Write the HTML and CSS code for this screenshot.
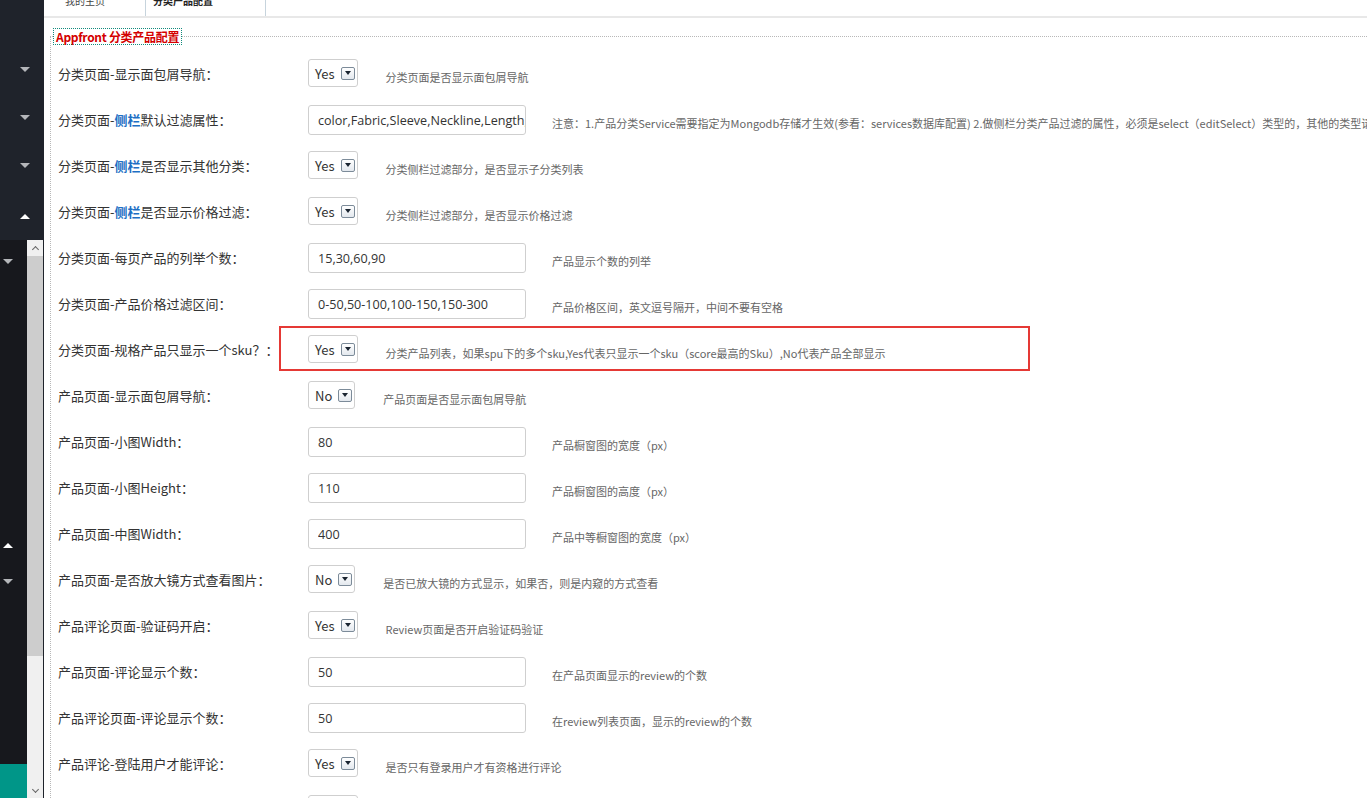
FILE: index.html
```html
<!DOCTYPE html>
<html lang="zh-CN">
<head>
<meta charset="utf-8">
<title>Appfront 分类产品配置</title>
<link rel="stylesheet" href="styles.css">
</head>
<body>
<div class="app">
  <aside class="sidebar">
    <div class="side-top">
      <div class="menu-item"><span class="tri down"></span></div>
      <div class="menu-item"><span class="tri down"></span></div>
      <div class="menu-item"><span class="tri down"></span></div>
      <div class="menu-item last"><span class="tri up"></span></div>
    </div>
    <div class="side-bottom">
      <div class="side-inner">
        <div class="sub-item first"><span class="tri down"></span></div>
        <div class="sub-gap"></div>
        <div class="sub-item"><span class="tri up"></span></div>
        <div class="sub-item short"><span class="tri down"></span></div>
        <div class="sub-fill"></div>
        <div class="sub-active"></div>
      </div>
      <div class="scrollbar">
        <div class="sb-btn"><span class="chev chev-up"></span></div>
        <div class="sb-thumb"></div>
        <div class="sb-track"></div>
        <div class="sb-btn"><span class="chev chev-down"></span></div>
      </div>
    </div>
  </aside>

  <main class="main">
    <div class="tabs">
      <div class="tab first"><span class="tab-text">我的主页</span></div>
      <div class="tab active"><span class="tab-text">分类产品配置</span></div>
    </div>

    <fieldset class="panel">
      <legend class="legend">Appfront 分类产品配置</legend>

      <div class="row">
        <label class="label">分类页面-显示面包屑导航：</label>
        <div class="select"><span>Yes</span><span class="arrow"></span></div>
        <span class="note sel">分类页面是否显示面包屑导航</span>
      </div>

      <div class="row">
        <label class="label">分类页面-<b class="hl">侧栏</b>默认过滤属性：</label>
        <input class="text" type="text" value="color,Fabric,Sleeve,Neckline,Length,Style">
        <span class="note inp">注意：1.产品分类Service需要指定为Mongodb存储才生效(参看：services数据库配置) 2.做侧栏分类产品过滤的属性，必须是select（editSelect）类型的，其他的类型请不要填写</span>
      </div>

      <div class="row">
        <label class="label">分类页面-<b class="hl">侧栏</b>是否显示其他分类：</label>
        <div class="select"><span>Yes</span><span class="arrow"></span></div>
        <span class="note sel">分类侧栏过滤部分，是否显示子分类列表</span>
      </div>

      <div class="row">
        <label class="label">分类页面-<b class="hl">侧栏</b>是否显示价格过滤：</label>
        <div class="select"><span>Yes</span><span class="arrow"></span></div>
        <span class="note sel">分类侧栏过滤部分，是否显示价格过滤</span>
      </div>

      <div class="row">
        <label class="label">分类页面-每页产品的列举个数：</label>
        <input class="text" type="text" value="15,30,60,90">
        <span class="note inp">产品显示个数的列举</span>
      </div>

      <div class="row">
        <label class="label">分类页面-产品价格过滤区间：</label>
        <input class="text" type="text" value="0-50,50-100,100-150,150-300">
        <span class="note inp">产品价格区间，英文逗号隔开，中间不要有空格</span>
      </div>

      <div class="row">
        <label class="label">分类页面-规格产品只显示一个sku？：</label>
        <div class="select"><span>Yes</span><span class="arrow"></span></div>
        <span class="note sel">分类产品列表，如果spu下的多个sku,Yes代表只显示一个sku（score最高的Sku）,No代表产品全部显示</span>
      </div>

      <div class="row">
        <label class="label">产品页面-显示面包屑导航：</label>
        <div class="select"><span>No</span><span class="arrow"></span></div>
        <span class="note sel">产品页面是否显示面包屑导航</span>
      </div>

      <div class="row">
        <label class="label">产品页面-小图Width：</label>
        <input class="text" type="text" value="80">
        <span class="note inp">产品橱窗图的宽度（px）</span>
      </div>

      <div class="row">
        <label class="label">产品页面-小图Height：</label>
        <input class="text" type="text" value="110">
        <span class="note inp">产品橱窗图的高度（px）</span>
      </div>

      <div class="row">
        <label class="label">产品页面-中图Width：</label>
        <input class="text" type="text" value="400">
        <span class="note inp">产品中等橱窗图的宽度（px）</span>
      </div>

      <div class="row">
        <label class="label">产品页面-是否放大镜方式查看图片：</label>
        <div class="select"><span>No</span><span class="arrow"></span></div>
        <span class="note sel">是否已放大镜的方式显示，如果否，则是内窥的方式查看</span>
      </div>

      <div class="row">
        <label class="label">产品评论页面-验证码开启：</label>
        <div class="select"><span>Yes</span><span class="arrow"></span></div>
        <span class="note sel">Review页面是否开启验证码验证</span>
      </div>

      <div class="row">
        <label class="label">产品页面-评论显示个数：</label>
        <input class="text" type="text" value="50">
        <span class="note inp">在产品页面显示的review的个数</span>
      </div>

      <div class="row">
        <label class="label">产品评论页面-评论显示个数：</label>
        <input class="text" type="text" value="50">
        <span class="note inp">在review列表页面，显示的review的个数</span>
      </div>

      <div class="row">
        <label class="label">产品评论-登陆用户才能评论：</label>
        <div class="select"><span>Yes</span><span class="arrow"></span></div>
        <span class="note sel">是否只有登录用户才有资格进行评论</span>
      </div>

      <div class="row">
        <label class="label">产品评论-评论是否需要审核：</label>
        <div class="select"><span>Yes</span><span class="arrow"></span></div>
        <span class="note sel">评论是否需要审核后才显示</span>
      </div>
    </fieldset>

    <div class="highlight"></div>
  </main>
</div>
</body>
</html>
```

FILE: styles.css
```css
html, body {
  margin: 0;
  padding: 0;
  height: 100%;
  overflow: hidden;
  background: #fff;
}

body {
  font-family: "Noto Sans CJK SC", "Noto Sans", sans-serif;
  color: #333;
}

.app {
  display: flex;
  height: 798px;
  overflow: hidden;
  position: relative;
}

/* ---------- sidebar ---------- */
.sidebar {
  width: 44px;
  flex: 0 0 44px;
  display: flex;
  flex-direction: column;
  background: #1f232b;
}

.side-top {
  height: 240px;
  padding-top: 45px;
  box-sizing: border-box;
}

.menu-item {
  height: 48px;
  display: flex;
  align-items: center;
  justify-content: flex-end;
  padding-right: 14px;
}

.menu-item.last {
  margin-top: 3px;
}

.tri {
  width: 0;
  height: 0;
  border-left: 5px solid transparent;
  border-right: 5px solid transparent;
}

.tri.down {
  border-top: 5px solid #b4b6ba;
}

.tri.up {
  border-bottom: 5px solid #ffffff;
}

.side-bottom {
  flex: 1;
  display: flex;
  min-height: 0;
}

.side-inner {
  width: 27px;
  display: flex;
  flex-direction: column;
  background: #17181d;
}

.sub-item {
  height: 42px;
  display: flex;
  align-items: center;
  padding-left: 3px;
}

.sub-item.short {
  height: 30px;
}

.sub-gap {
  height: 242px;
}

.sub-fill {
  flex: 1;
}

.sub-active {
  height: 34px;
  background: #009688;
}

.scrollbar {
  width: 16px;
  display: flex;
  flex-direction: column;
  background: #f0f0f0;
}

.sb-btn {
  height: 16px;
  display: flex;
  align-items: center;
  justify-content: center;
  background: #f0f0f0;
}

.chev {
  width: 4px;
  height: 4px;
  border-left: 1.5px solid #666;
  border-top: 1.5px solid #666;
}

.chev-up {
  transform: translateY(1px) rotate(45deg);
}

.chev-down {
  transform: translateY(-1px) rotate(225deg);
}

.sb-thumb {
  height: 400px;
  background: #cdcdcd;
}

.sb-track {
  flex: 1;
}

/* ---------- main ---------- */
.main {
  flex: 1;
  min-width: 0;
  overflow: hidden;
  white-space: nowrap;
}

.tabs {
  height: 16px;
  border-bottom: 2px solid #e8e8e8;
  display: flex;
  overflow: hidden;
}

.tab {
  height: 16px;
  border-right: 1px solid #c7d4dd;
  box-sizing: content-box;
  overflow: hidden;
  font-size: 10px;
}

.tab.first {
  width: 80px;
  padding-left: 21px;
  color: #444;
}

.tab.active {
  width: 112px;
  padding-left: 7px;
  color: #222;
  font-weight: bold;
}

.tab-text {
  display: block;
  line-height: 10px;
  margin-top: -4px;
}

.panel {
  margin: 10px 0 0 6px;
  padding: 5px 2px 0 2px;
  border: 1px dotted #b8b8b8;
  border-right: none;
  border-bottom: none;
  min-width: 0;
}

.legend {
  padding: 0 2px;
  border: 1px dotted #128a7c;
  color: #d40000;
  font-weight: bold;
  font-size: 12px;
  line-height: 15px;
  letter-spacing: -0.3px;
}

.row {
  display: flex;
  align-items: center;
  height: 46px;
}

.label {
  width: 255px;
  flex: 0 0 255px;
  box-sizing: border-box;
  padding-left: 5px;
  font-size: 13px;
  color: #333;
}

.hl {
  color: #1d6fc4;
  font-weight: bold;
}

.select {
  display: inline-flex;
  align-items: center;
  height: 28px;
  box-sizing: border-box;
  border: 1px solid #cfcfcf;
  border-radius: 3px;
  padding: 0 2px 0 6px;
  font-size: 13px;
  color: #333;
  flex: 0 0 auto;
}

.arrow {
  position: relative;
  width: 14px;
  height: 13px;
  box-sizing: border-box;
  margin-left: 6px;
  border: 1px solid #7c8b99;
  border-radius: 2px;
  background: linear-gradient(#ffffff, #e3e8ee);
  display: flex;
  align-items: center;
  justify-content: center;
}

.arrow::after {
  content: "";
  width: 0;
  height: 0;
  border-left: 3.5px solid transparent;
  border-right: 3.5px solid transparent;
  border-top: 4px solid #1a2430;
}

.text {
  width: 218px;
  height: 30px;
  box-sizing: border-box;
  border: 1px solid #cfcfcf;
  border-radius: 3px;
  padding: 0 0 0 9px;
  margin: 2px 0 0 0;
  font-family: "Open Sans", "Noto Sans CJK SC", sans-serif;
  font-size: 12.6px;
  color: #333;
  background: #fff;
  flex: 0 0 auto;
  outline: none;
}

.note {
  font-size: 11px;
  color: #666;
  margin-top: 8px;
  white-space: nowrap;
}

.note.sel {
  margin-left: 28px;
}

.note.inp {
  margin-left: 26px;
}

/* annotation overlay */
.highlight {
  position: absolute;
  left: 279px;
  top: 326px;
  width: 751px;
  height: 45px;
  box-sizing: border-box;
  border: 2px solid #e53935;
  pointer-events: none;
}
```
